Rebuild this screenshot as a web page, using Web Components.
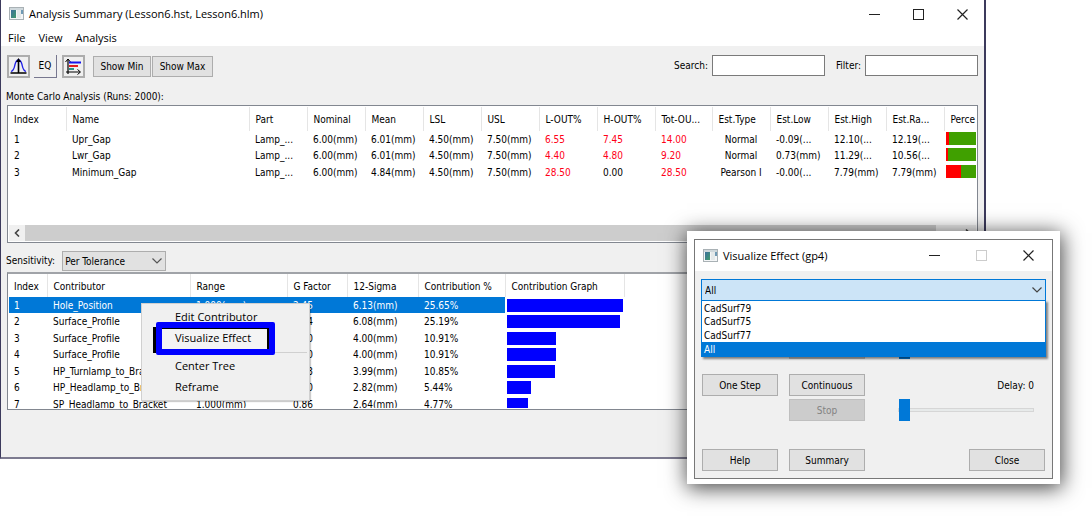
<!DOCTYPE html>
<html lang="en">
<head>
<meta charset="utf-8">
<title>Analysis Summary</title>
<style>
  html, body { margin: 0; height: 100%; }
  body { position: relative; overflow: hidden; background: #fff; color: #000;
    font: 10px/16px "DejaVu Sans Condensed", "Noto Sans", sans-serif; }
</style>
</head>
<body>
<analysis-app></analysis-app>
<script>
const define = (name, html, extra) => customElements.define(name, class extends HTMLElement {
  constructor() {
    super();
    this.attachShadow({ mode: 'open' }).innerHTML = html;
  }
  connectedCallback() { if (extra) extra(this, this.shadowRoot); }
});

const BUTTON = `
  button { font: inherit; color: inherit; margin: 0; padding: 0; box-sizing: border-box; }
`;

/* Small application glyph of the title bars */
define('app-icon', `
<style>:host { display: block; width: 16px; height: 14px; } svg { display: block; }</style>
<svg width="16" height="14" viewBox="0 0 16 14" aria-hidden="true">
  <defs><linearGradient id="g" x1="0" y1="0" x2="1" y2="1"><stop offset="0" stop-color="#3d6f9e"/><stop offset="1" stop-color="#3f9a6a"/></linearGradient></defs>
  <rect x=".5" y=".5" width="14" height="12" fill="#f4f6f7" stroke="#a9b1b5"/>
  <rect x="1" y="1" width="13" height="2" fill="#cfd8dc"/>
  <rect x="2" y="3" width="5" height="8" fill="url(#g)"/>
  <rect x="8" y="3" width="4" height="8" fill="#e4e9ea"/>
  <rect x="12" y="3" width="2" height="4" fill="#6f9ab5"/>
</svg>`);

/* Title bar: icon, title and the three window buttons */
define('title-bar', `
<style>
  ${BUTTON}
  :host { display: flex; align-items: center; background: #fff; padding-left: 8px; gap: 4px;
    font: 11px/16px "Open Sans", "Noto Sans", sans-serif; }
  h1 { font: inherit; margin: 0; flex: 1; white-space: nowrap; }
  .ctl { display: flex; }
  button { border: 0; background: none; width: var(--ctl, 44px); height: 28px; display: grid; place-items: center; color: #222; }
  button:disabled { color: #ccc; }
</style>
<app-icon></app-icon>
<h1><slot></slot></h1>
<div class="ctl">
  <button aria-label="Minimize"><svg width="11" height="11"><path d="M0 5.5h11" stroke="currentColor"/></svg></button>
  <button aria-label="Maximize" class="max"><svg width="11" height="11"><rect x=".5" y=".5" width="10" height="10" fill="none" stroke="currentColor"/></svg></button>
  <button aria-label="Close"><svg width="11" height="11"><path d="M.5.5l10 10M10.5.5l-10 10" stroke="currentColor" stroke-width="1.2"/></svg></button>
</div>`, (el, root) => { root.querySelector('.max').disabled = el.hasAttribute('fixed'); });

define('menu-bar', `
<style>
  ${BUTTON}
  :host { display: flex; gap: 13px; padding: 0 7px; height: 18px; background: #fff;
    font: 11px/20px "Open Sans", "Noto Sans", sans-serif; }
  button { border: 0; background: none; }
</style>
<button>File</button><button>View</button><button>Analysis</button>`);

define('tool-bar', `
<style>
  ${BUTTON}
  :host { display: flex; align-items: flex-start; padding: 9px 6px 0 6px; height: 34px; box-sizing: border-box; }
  .icon { width: 23px; height: 23px; margin-right: 4px; border: 2px solid #adadad; background: #f0f0f0; display: grid; place-items: center; }
  .eq { margin-right: 5px; border-color: #f0f0f0 #77778f #77778f #f0f0f0; border-width: 0 1px 1px 0; }
  .txt { height: 21px; background: #e1e1e1; border: 1px solid #adadad; margin-top: 1px; padding-top: 1px; }
  .min { width: 58px; margin-left: 4px; margin-right: 1px; }
  .maxi { width: 61px; }
  .fields { margin-left: auto; display: flex; }
  label { line-height: 21px; margin-right: 4px; }
  input { width: 113px; height: 21px; box-sizing: border-box; border: 1px solid #7a7a7a; background: #fff; font: inherit; padding: 0 3px; margin: 0; }
  .second { margin-left: 11px; }
</style>
<button class="icon" aria-label="Distribution"><svg width="17" height="17" viewBox="0 0 17 17"><path d="M1 13.500c3-1 3-3 4-7 .8-3 1.500-4.500 3.500-4.500s2.700 1.500 3.500 4.500c1 4 1 6 4 7" fill="none" stroke="#2222e8" stroke-width="1.300"/><path d="M8.500 3v12M.5 15h16" stroke="#000" stroke-width="1.600"/><path d="M8.500 0l2.500 4h-5z"/></svg></button>
<button class="icon eq">EQ</button>
<button class="icon" aria-label="Contributions"><svg width="17" height="17" viewBox="0 0 17 17"><path d="M3 1v15M1 14h14" stroke="#000" stroke-width="1.200" fill="none"/><path d="M.5 4L3 1l2.500 3M12.500 11.500l3 2.500-3 2.500" fill="none" stroke="#000"/><path d="M4 4.500h12" stroke="#1414f0" stroke-width="2"/><path d="M4 8h9" stroke="#e02020" stroke-width="2"/><path d="M4 11h5" stroke="#28928a" stroke-width="2"/></svg></button>
<button class="txt min">Show Min</button>
<button class="txt maxi">Show Max</button>
<div class="fields">
  <label for="s">Search:</label><input id="s">
  <label class="second" for="f">Filter:</label><input id="f">
</div>`);

/* List view: a bordered box that clips its table */
const GRID = `
  :host { display: block; border: 1px solid #828790; background: #fff; overflow: hidden; padding: 1px; box-sizing: border-box; }
  .clip { overflow: hidden; height: 100%; }
  table { border-collapse: collapse; table-layout: fixed; width: 0; white-space: nowrap; }
  th, td { padding: 2px 0 0 6px; text-align: left; font-weight: 400; overflow: hidden; line-height: 14px; vertical-align: top; box-sizing: border-box; }
  th { height: 23px; line-height: 21px; border-right: 1px solid #e5e5e5; }
  tr > :first-child { padding-left: 5px; }
  tbody tr { height: 16px; }
  tbody tr:nth-child(even) { height: 17px; }
`;
const cols = list => '<colgroup>' + list.map(w => `<col style="width:${w}px">`).join('') + '</colgroup>';
const head = list => '<thead><tr>' + list.map(t => `<th scope="col">${t}</th>`).join('') + '</tr></thead>';

const runs = [
  ['1', 'Upr_Gap', 'Lamp_...', '6.00(mm)', '6.01(mm)', '4.50(mm)', '7.50(mm)', '6.55', '7.45', '14.00', 'Normal', '-0.09(...', '12.10(...', '12.19(...', 3],
  ['2', 'Lwr_Gap', 'Lamp_...', '6.00(mm)', '6.01(mm)', '4.50(mm)', '7.50(mm)', '4.40', '4.80', '9.20', 'Normal', '0.73(mm)', '11.29(...', '10.56(...', 2],
  ['3', 'Minimum_Gap', 'Lamp_...', '6.00(mm)', '4.84(mm)', '4.50(mm)', '7.50(mm)', '28.50', '0.00', '28.50', 'Pearson I', '-0.00(...', '7.79(mm)', '7.79(mm)', 15]];
define('run-grid', `
<style>
  ${GRID}
  :host { display: flex; flex-direction: column; height: 138px; }
  .clip { flex: 1; }
  th { height: 24px; line-height: 22px; }
  .red { color: #ff0018; }
  .mid { text-align: center; padding-left: 0; }
  .bar { padding: 1px 0 0 2px; }
  .bar i { display: block; height: 13px; background: #40a000; border-left: var(--bad) solid #f00; }
  .scroll { display: flex; height: 16px; background: #f0f0f0; }
  .scroll button { width: 16px; border: 0; padding: 0; background: none; }
  .thumb { flex: 1; background: #cdcdcd; margin-right: 24px; }
  svg { display: block; margin: auto; }
</style>
<div class="clip"><table>
${cols([57, 183, 58, 58, 58, 58, 58, 58, 58, 57, 58, 58, 58, 58, 58])}
${head(['Index', 'Name', 'Part', 'Nominal', 'Mean', 'LSL', 'USL', 'L-OUT%', 'H-OUT%', 'Tot-OU...', 'Est.Type', 'Est.Low', 'Est.High', 'Est.Ra...', 'Perce'])}
<tbody>${runs.map(r => '<tr>' + r.map((v, i) => {
  if (i === 14) return `<td class="bar"><i style="--bad:${v}px"></i></td>`;
  const c = i >= 7 && i <= 9 && v !== '0.00' ? 'red' : i === 10 ? 'mid' : '';
  return `<td class="${c}">${v}</td>`;
}).join('') + '</tr>').join('')}</tbody>
</table></div>
<div class="scroll">
  <button aria-label="Scroll left"><svg width="8" height="8"><path d="M6 0.500L2.500 4L6 7.500" fill="none" stroke="#444" stroke-width="1.600"/></svg></button>
  <div class="thumb"></div>
  <button aria-label="Scroll right"><svg width="8" height="8"><path d="M2 0.500L5.500 4L2 7.500" fill="none" stroke="#444" stroke-width="1.600"/></svg></button>
</div>`);

const parts = [
  ['1', 'Hole_Position', '1.000(mm)', '2.45', '6.13(mm)', '25.65%', 116],
  ['2', 'Surface_Profile', '', '1.14', '6.08(mm)', '25.19%', 113],
  ['3', 'Surface_Profile', '', '1.00', '4.00(mm)', '10.91%', 49],
  ['4', 'Surface_Profile', '', '1.00', '4.00(mm)', '10.91%', 49],
  ['5', 'HP_Turnlamp_to_Bracket', '', '1.33', '3.99(mm)', '10.85%', 48],
  ['6', 'HP_Headlamp_to_Bracket', '', '1.00', '2.82(mm)', '5.44%', 24],
  ['7', 'SP_Headlamp_to_Bracket', '1.000(mm)', '0.86', '2.64(mm)', '4.77%', 21]];
define('part-grid', `
<style>
  ${GRID}
  :host { height: 138px; border-top: 2px solid #a0a3a8; padding-top: 0; }
  .sel td:not(.bar) { background: #0078d7; color: #fff; }
  .bar { padding: 2px 0 0 2px; }
  .bar i { display: block; height: 13px; background: #00f; }
</style>
<div class="clip"><table>
${cols([38, 143, 97, 60, 71, 87, 119])}
${head(['Index', 'Contributor', 'Range', 'G Factor', '12-Sigma', 'Contribution %', 'Contribution Graph'])}
<tbody>${parts.map((r, n) => `<tr class="${n ? '' : 'sel'}">` + r.map((v, i) =>
  i === 6 ? `<td class="bar"><i style="width:${v}px"></i></td>` : `<td>${v}</td>`).join('') + '</tr>').join('')}</tbody>
</table></div>`);

define('context-menu', `
<style>
  ${BUTTON}
  :host { display: block; width: 169px; height: 98px; box-sizing: border-box; background: #f0f0f0; border: 1px solid #d0d0d0;
    padding: 2px 2px; font: 11px/21px "Open Sans", "Noto Sans", sans-serif; box-shadow: 1px 1px 1px #0003; }
  button { display: block; width: 100%; height: 21px; border: 0; background: none; text-align: left; padding-left: 31px; white-space: nowrap; position: relative; z-index: 1; }
  hr { border: 0; border-top: 1px solid #d0d0d0; margin: 4px 0 2px 31px; }
  .mark { position: absolute; left: 14px; top: 18px; width: 119px; height: 33px; box-sizing: border-box; border: 6px solid #00f; border-radius: 2px;
    background: #f4f4f4; box-shadow: inset -2px 1px #000; }
  .mark::before { content: ""; position: absolute; left: -9px; top: -1px; width: 3px; height: 26px; background: #000; }
</style>
<div class="mark"></div>
<button>Edit Contributor</button>
<button>Visualize Effect</button>
<hr>
<button>Center Tree</button>
<button>Reframe</button>`);

define('effect-dialog', `
<style>
  ${BUTTON}
  :host { display: block; box-sizing: border-box; width: 373px; background: #fff; padding: 8px 7px 5px; box-shadow: 1px 3px 20px 1px #000b; }
  .win { border: 1px solid #777; background: #f0f0f0; }
  title-bar { height: 31px; --ctl: 47px; }
  .body { padding: 8px 6px 7px; position: relative; }
  .combo { position: relative; z-index: 1; }
  select { appearance: none; display: block; width: 100%; height: 22px; box-sizing: border-box; margin: 0; border: 1px solid #0078d7; border-radius: 0;
    background: #cce4f7; font: inherit; color: inherit; padding: 1px 3px 0; }
  .combo svg { position: absolute; right: 4px; top: 8px; }
  ul { position: absolute; left: 0; right: 0; top: 21px; margin: 0; padding: 1px 0 0; list-style: none; background: #fff; border: 1px solid #0078d7; box-shadow: 2px 2px 2px #0007; line-height: 14px; }
  li { height: 13px; padding-left: 2px; }
  li:nth-child(2) { height: 14px; }
  li:last-child { background: #0078d7; color: #fff; height: 14px; line-height: 15px; }
  .grid { display: grid; grid-template-columns: 76px 76px 1fr; column-gap: 11px; row-gap: 3px; padding: 36px 12px 0 1px; align-items: center; }
  .btn { height: 22px; border: 1px solid #adadad; background: #e1e1e1; padding-top: 1px; }
  .btn:disabled { background: #ccc; border-color: #bfbfbf; color: #838383; }
  .gap { margin-bottom: 12px; }
  label { justify-self: end; padding-top: 1px; }
  input { appearance: none; margin: 0 0 0 22px; height: 22px; background: none; width: auto; justify-self: stretch; min-width: 0; }
  input::-webkit-slider-runnable-track { height: 4px; background: #e7eaea; border: 1px solid #d6d6d6; box-sizing: border-box; }
  input::-webkit-slider-thumb { appearance: none; width: 11px; height: 22px; margin-top: -10px; background: #0078d7; border: 0; border-radius: 0; }
  .foot { display: flex; gap: 11px; padding: 28px 1px 0 1px; }
  .foot .btn { width: 76px; }
  .foot .btn:last-child { margin-left: auto; }
</style>
<div class="win">
  <title-bar fixed>Visualize Effect (gp4)</title-bar>
  <div class="body">
    <div class="combo">
      <select aria-label="Surface"><option>All</option></select>
      <svg width="10" height="6"><path d="M.5.5l4.500 4.500l4.500-4.500" fill="none" stroke="#444" stroke-width="1.200"/></svg>
      <ul role="listbox" aria-label="Surfaces"><li role="option">CadSurf79</li><li role="option">CadSurf75</li><li role="option">CadSurf77</li><li role="option">All</li></ul>
    </div>
    <div class="grid">
      <span></span><button class="btn gap" disabled aria-label="Stop steps"></button><input class="gap" type="range" value="0" aria-label="Steps">
      <button class="btn">One Step</button><button class="btn">Continuous</button><label for="d">Delay: 0</label>
      <span></span><button class="btn" disabled>Stop</button><input id="d" type="range" value="0">
    </div>
    <div class="foot"><button class="btn">Help</button><button class="btn">Summary</button><button class="btn">Close</button></div>
  </div>
</div>`);

define('analysis-app', `
<style>
  :host { display: block; }
  main { margin-right: 106px; border: solid #3c3a5c; border-width: 0 2px 0 1px; border-bottom: 2px solid #7d7b90; background: #f0f0f0; }
  .caption { padding: 9px 5px 0; line-height: 16px; }
  .panel { padding: 0 6px; position: relative; }
  .sens { display: flex; align-items: center; height: 29px; padding: 8px 5px 1px; box-sizing: border-box; }
  .pick { position: relative; margin-left: 7px; }
  select { appearance: none; width: 104px; height: 20px; box-sizing: border-box; display: block; margin: 0; border: 1px solid #adadad; border-radius: 0; background: #e1e1e1; font: inherit; color: inherit; padding: 1px 2px 0; }
  .pick svg { position: absolute; right: 4px; top: 7px; }
  footer { height: 47px; }
  context-menu { position: absolute; left: 140px; top: 31px; }
  effect-dialog { position: absolute; right: 32px; top: 231px; }
</style>
<main>
  <title-bar>Analysis Summary (Lesson6.hst, Lesson6.hlm)</title-bar>
  <menu-bar></menu-bar>
  <tool-bar></tool-bar>
  <div class="caption">Monte Carlo Analysis (Runs: 2000):</div>
  <div class="panel"><run-grid></run-grid></div>
  <div class="sens"><label for="t">Sensitivity:</label>
    <div class="pick"><select id="t"><option>Per Tolerance</option></select>
    <svg width="10" height="6"><path d="M.5.5l4.500 4.500l4.500-4.500" fill="none" stroke="#555" stroke-width="1.200"/></svg></div></div>
  <div class="panel"><part-grid></part-grid><context-menu></context-menu></div>
  <footer></footer>
</main>
<effect-dialog></effect-dialog>`);
</script>
</body>
</html>
